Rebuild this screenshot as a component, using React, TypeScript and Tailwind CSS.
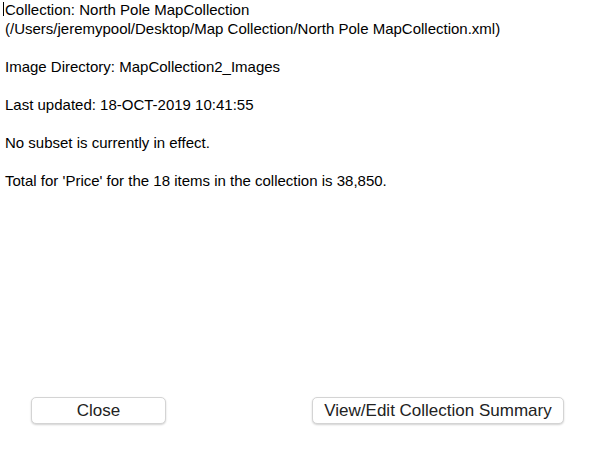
import React from 'react';

function App() {
  const lines = [
    'Collection: North Pole MapCollection',
    '(/Users/jeremypool/Desktop/Map Collection/North Pole MapCollection.xml)',
    '',
    'Image Directory: MapCollection2_Images',
    '',
    'Last updated: 18-OCT-2019 10:41:55',
    '',
    'No subset is currently in effect.',
    '',
    "Total for 'Price' for the 18 items in the collection is 38,850.",
  ];

  return (
    <div className="w-[594px] h-[461px] bg-white flex flex-col font-['Liberation_Sans',Arial,sans-serif] text-black">
      <div className="relative flex-1 pl-[5px] pt-0 text-[15px] leading-[19px]">
        <span className="absolute left-[3px] top-[2px] w-[1px] h-[14px] bg-black" />
        {lines.map((l, i) => (
          <div key={i} className="h-[19px] whitespace-nowrap">
            {l}
          </div>
        ))}
      </div>
      <div className="flex justify-between pl-[31px] pr-[30px] pb-[37px]">
        <button className="w-[135px] h-[27px] rounded-[5px] bg-white border border-[#d4d4d4] shadow-[0_1px_2px_rgba(0,0,0,0.18)] text-[17px] text-[#222]">
          Close
        </button>
        <button className="w-[252px] h-[27px] rounded-[5px] bg-white border border-[#d4d4d4] shadow-[0_1px_2px_rgba(0,0,0,0.18)] text-[17px] text-[#222]">
          View/Edit Collection Summary
        </button>
      </div>
    </div>
  );
}

export default App;
